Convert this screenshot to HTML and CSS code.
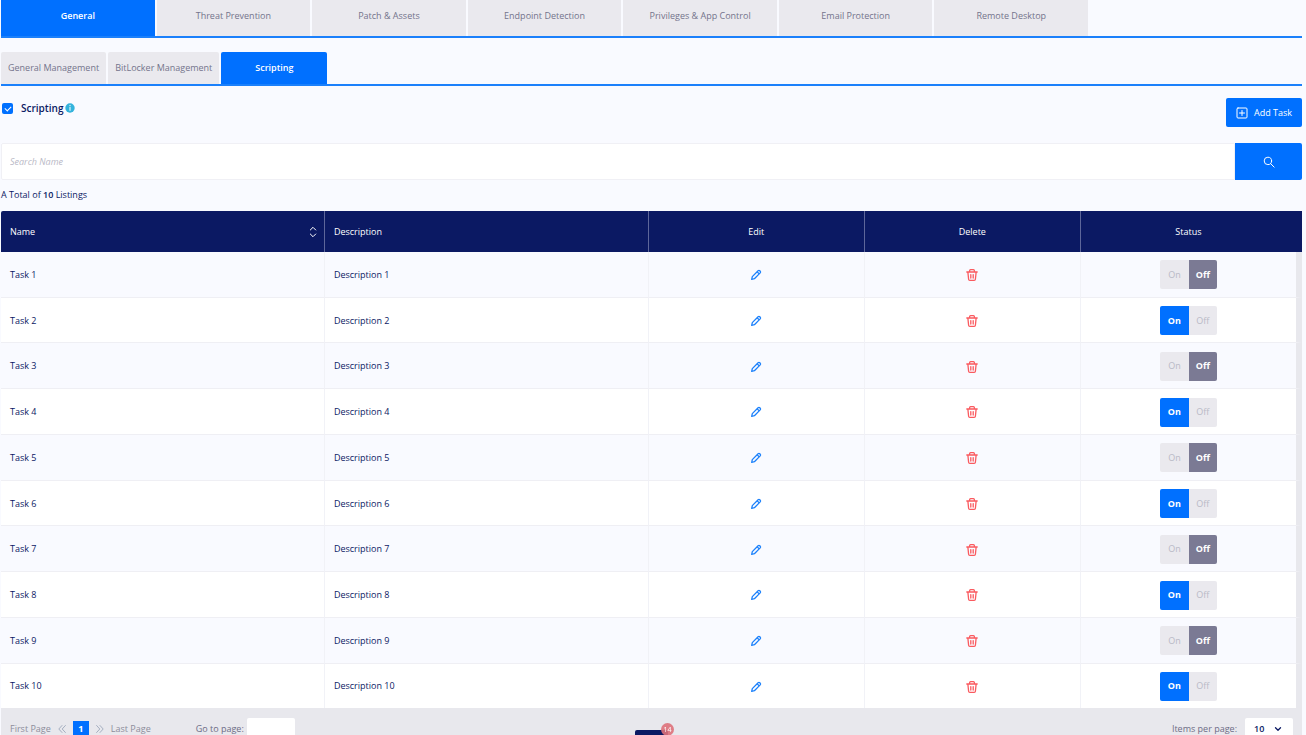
FILE: index.html
```html
<!DOCTYPE html>
<html lang="en">

<head>
  <meta charset="UTF-8">
  <meta name="viewport" content="width=device-width, initial-scale=1.0">
  <title>Scripting</title>
  <link rel="stylesheet" href="styles.css">
</head>

<body>

  <!-- icons -->
  <svg class="sprite" width="0" height="0">
    <symbol id="pencil" viewBox="0 0 12 12">
      <path d="M1.7 10.3l.6-2.7 5.8-5.8q.9-.8 1.7 0l.4.4q.8.8 0 1.7L4.4 9.7zM7.2 2.9l1.9 1.9" />
    </symbol>
    <symbol id="trash" viewBox="0 0 12 12">
      <path d="M.8 3h10.4M3.6 2.9V1.7q0-1 1-1h2.8q1 0 1 1v1.2M1.9 3.4l.7 6.8q.1 1.1 1.2 1.1h4.4q1.1 0 1.2-1.1l.7-6.8M4.8 5.6v3.4M7.2 5.6v3.4" />
    </symbol>
  </svg>

  <nav class="tabs">
    <button class="tab active">General</button>
    <button class="tab">Threat Prevention</button>
    <button class="tab">Patch &amp; Assets</button>
    <button class="tab">Endpoint Detection</button>
    <button class="tab">Privileges &amp; App Control</button>
    <button class="tab">Email Protection</button>
    <button class="tab">Remote Desktop</button>
  </nav>

  <nav class="subtabs">
    <button class="tab">General Management</button>
    <button class="tab">BitLocker Management</button>
    <button class="tab active">Scripting</button>
  </nav>

  <div class="bar">
    <div class="switch">
      <input type="checkbox" id="scripting" checked>
      <label for="scripting">Scripting</label>
      <svg class="info" viewBox="0 0 10 10">
        <circle cx="5" cy="5" r="4.7" />
        <path d="M5 4.4v3M5 2.3v.5" />
      </svg>
    </div>
    <button class="add">
      <svg viewBox="0 0 12 12">
        <rect x="1" y="1" width="10" height="10" rx="1" />
        <path d="M6 3.5v5M3.5 6h5" />
      </svg>
      Add Task
    </button>
  </div>

  <form class="search">
    <input type="text" placeholder="Search Name" aria-label="Search Name">
    <button type="button" aria-label="Search">
      <svg viewBox="0 0 12 12">
        <circle cx="4.9" cy="4.9" r="3.7" />
        <path d="M7.7 7.7l3.4 3.4" />
      </svg>
    </button>
  </form>

  <p class="total">A Total of <b>10</b> Listings</p>

  <table class="list">
    <thead>
      <tr>
        <th class="name">
          <div class="sort">Name
            <svg viewBox="0 0 8 12">
              <path d="M1.3 4L4 1.3 6.7 4M1.3 8L4 10.7 6.7 8" />
            </svg>
          </div>
        </th>
        <th class="desc">Description</th>
        <th class="act">Edit</th>
        <th class="act">Delete</th>
        <th class="status">Status</th>
      </tr>
    </thead>
    <tbody></tbody>
  </table>

  <footer class="pager">
    <button class="link">First Page</button>
    <button class="arrow" aria-label="Previous page">
      <svg viewBox="0 0 8 8"><path d="M4 .5L.8 4 4 7.5M7.4 .5L4.2 4l3.2 3.5" /></svg>
    </button>
    <button class="num">1</button>
    <button class="arrow" aria-label="Next page">
      <svg viewBox="0 0 8 8"><path d="M.6 .5L3.8 4 .6 7.5M4 .5L7.2 4 4 7.5" /></svg>
    </button>
    <button class="link">Last Page</button>
    <label class="goto" for="goto">Go to page:</label>
    <input type="text" id="goto">
    <label class="per" for="per">Items per page:</label>
    <div class="select">
      <select id="per">
        <option>10</option>
        <option>20</option>
        <option>50</option>
      </select>
      <svg viewBox="0 0 8 8"><path d="M1.5 2.8L4 5.2l2.5-2.4" /></svg>
    </div>
  </footer>

  <button class="widget" aria-label="Notifications"><span>14</span></button>

  <script>
    var tbody = document.querySelector('tbody')
    for (let i = 1; i <= 10; i++) {
      var on = i % 2 === 0
      tbody.innerHTML += `
        <tr>
          <td>Task ${i}</td>
          <td>Description ${i}</td>
          <td class="act"><button class="edit" aria-label="Edit task ${i}"><svg><use href="#pencil"></use></svg></button></td>
          <td class="act"><button class="del" aria-label="Delete task ${i}"><svg><use href="#trash"></use></svg></button></td>
          <td class="status">
            <div class="toggle">
              <button class="${on ? 'on' : ''}">On</button><button class="${on ? '' : 'off'}">Off</button>
            </div>
          </td>
        </tr>`
    }

    tbody.onclick = function (evt) {
      var target = evt.target
      if (!target.closest('.toggle')) return
      var btns = target.closest('.toggle').querySelectorAll('button')
      btns[0].className = target === btns[0] ? 'on' : ''
      btns[1].className = target === btns[1] ? 'off' : ''
    }
  </script>
</body>

</html>
```
FILE: styles.css
```css
* {
  margin: 0;
  padding: 0;
  box-sizing: border-box;
}

body {
  padding: 0 4px 0 1px;
  background: #f9faff;
  color: #0b1963;
  font: 9px/12px "Open Sans", sans-serif;
  overflow: hidden;
}

button,
input,
select {
  font: inherit;
  color: inherit;
  border: 0;
  background: none;
}

button {
  cursor: pointer;
}

svg {
  display: block;
  fill: none;
  stroke: currentColor;
  stroke-linecap: round;
  stroke-linejoin: round;
}

.sprite {
  position: absolute;
}

/* tabs */
.tabs,
.subtabs {
  display: flex;
  gap: 2px;
  border-bottom: 2px solid #1b80fb;
}

.tabs {
  height: 38px;
  padding-right: 214px;
}

.tab {
  background: #eae9ee;
  color: #74748c;
}

.tabs .tab {
  flex: 1;
  padding-bottom: 4px;
}

.tab.active {
  background: #0070ff;
  color: #fff;
  font-weight: 600;
}

.subtabs {
  height: 34px;
  margin-top: 14px;
}

.subtabs .tab {
  padding: 0 7px;
  border-radius: 2px 2px 0 0;
}

.subtabs .active {
  min-width: 106px;
}

/* title and add button */
.bar {
  display: flex;
  justify-content: space-between;
  margin-top: 12px;
}

.switch {
  display: flex;
  align-items: center;
  height: 20px;
  font-size: 10px;
  font-weight: 600;
}

.switch input {
  appearance: none;
  width: 11px;
  height: 11px;
  margin: 0 8px 0 1px;
  border-radius: 2px;
  background: #0070ff;
}

.switch input:checked::before {
  content: "";
  display: block;
  width: 5px;
  height: 3px;
  margin: 3px;
  border: solid #fff;
  border-width: 0 0 1px 1px;
  transform: rotate(-45deg);
}

.info {
  width: 10px;
  height: 10px;
  margin-left: 2px;
  stroke: #fff;
}

.info circle {
  fill: #34b3dc;
  stroke: none;
}

.add {
  display: flex;
  align-items: center;
  justify-content: center;
  gap: 6px;
  width: 76px;
  height: 29px;
  border-radius: 2px;
  background: #0070ff;
  color: #fff;
}

.add svg {
  width: 12px;
  height: 12px;
}

/* search */
.search {
  display: flex;
  height: 37px;
  margin-top: 16px;
}

.search input {
  flex: 1;
  padding: 0 8px;
  border: 1px solid #f0f0f5;
  border-radius: 2px 0 0 2px;
  background: #fff;
}

.search input::placeholder {
  color: #b9b9c6;
  font-style: italic;
}

.search button {
  display: flex;
  align-items: center;
  justify-content: center;
  width: 67px;
  border-radius: 0 2px 2px 0;
  background: #0070ff;
  color: #fff;
}

.search svg {
  width: 12px;
  height: 12px;
}

.total {
  margin: 9px 0 10px;
}

.total b {
  font-weight: 600;
}

/* table */
.list {
  width: 100%;
  height: 497px;
  table-layout: fixed;
  border-collapse: separate;
  border-spacing: 0;
}

.list th {
  height: 41px;
  padding: 0 9px;
  border-right: 1px solid #5d669a;
  background: #0b1963;
  color: #fff;
  font-weight: 500;
  text-align: left;
}

.list th:first-child {
  border-radius: 2px 0 0 0;
}

.list td {
  padding: 1px 9px 0;
  border-right: 1px solid #f1f2f7;
  border-bottom: 1px solid #efeff4;
  background: #fff;
}

.list tr:nth-child(odd) td {
  background: #f9faff;
}

.list tr:last-child td {
  border-bottom: 0;
}

.name,
.desc {
  width: 24.9%;
}

.list .act,
.list .status {
  text-align: center;
}

.act {
  width: 16.6%;
}

.list th.status {
  border-right: 6px solid #0b1963;
}

.list td.status {
  border-right: 6px solid #e8e8ed;
}

.sort {
  display: flex;
  align-items: center;
  justify-content: space-between;
}

.sort svg {
  width: 8px;
  height: 12px;
  margin-right: -2px;
}

.act button {
  vertical-align: middle;
}

.act svg {
  width: 12px;
  height: 12px;
}

.edit {
  color: #1b80fb;
  stroke-width: 1.3;
}

.del {
  color: #fa5a5f;
  stroke-width: 1.3;
}

.toggle {
  display: inline-flex;
  vertical-align: middle;
  border-radius: 2px;
  overflow: hidden;
}

.toggle button {
  width: 29px;
  height: 29px;
  background: #eae9ee;
  color: #b9b9c6;
}

.toggle button:last-child {
  width: 28px;
}

.toggle .on {
  background: #0070ff;
  color: #fff;
  font-weight: 700;
}

.toggle .off {
  background: #7b7a94;
  color: #fff;
  font-weight: 700;
}

/* pager */
.pager {
  display: flex;
  align-items: center;
  height: 41px;
  padding: 0 9px;
  background: #e8e8ed;
  color: #6d6c86;
}

.link {
  color: #8d8d9c;
}

.arrow {
  margin: 0 7px;
  color: #a5afc0;
}

.arrow svg {
  width: 8px;
  height: 8px;
}

.num {
  width: 16px;
  height: 16px;
  background: #0070ff;
  color: #fff;
  font-weight: 700;
}

.goto {
  margin: 0 3px 0 45px;
}

.pager input {
  width: 48px;
  height: 21px;
  border-radius: 2px;
  background: #fff;
}

.per {
  margin: 0 8px 0 auto;
}

.select {
  position: relative;
}

.select select {
  appearance: none;
  width: 48px;
  height: 21px;
  padding-left: 9px;
  border-radius: 2px;
  background: #fff;
  color: #0b1963;
  font-weight: 600;
}

.select svg {
  position: absolute;
  top: 7px;
  right: 11px;
  width: 8px;
  height: 8px;
  color: #0b1963;
  stroke-width: 1.3;
  pointer-events: none;
}

/* floating notifications button */
.widget {
  position: fixed;
  bottom: -28px;
  left: calc(50% - 18px);
  width: 33px;
  height: 33px;
  border-radius: 2px;
  background: #0b1963;
}

.widget span {
  position: absolute;
  top: -7px;
  right: -6px;
  width: 13px;
  height: 13px;
  border-radius: 50%;
  background: rgba(222, 113, 122, 0.9);
  color: #fff;
  font-size: 7px;
  line-height: 13px;
}
```
